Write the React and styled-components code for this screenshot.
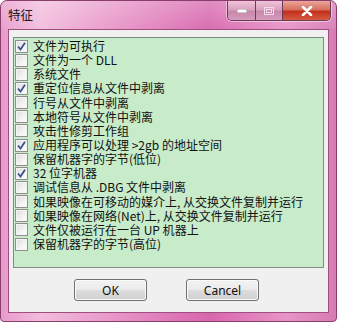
import React from "react";
import styled, { createGlobalStyle } from "styled-components";

const Global = createGlobalStyle`
  html, body { margin: 0; padding: 0; background: #ffffff; }
  body { width: 337px; height: 322px; overflow: hidden; }
`;

const Frame = styled.div`
  width: 337px;
  height: 322px;
  box-sizing: border-box;
  border: 1px solid #8a3e6c;
  border-radius: 7px 7px 4px 4px;
  background: linear-gradient(90deg, #e79ccb 0%, #f2bcdc 12%, #e48bc2 40%, #d866ad 62%, #e794c7 85%, #d77bb4 100%);
  display: flex;
  flex-direction: column;
  overflow: hidden;
  font-family: "Noto Sans CJK SC", "Noto Sans", sans-serif;
`;

const TitleBar = styled.div`
  height: 28px;
  display: flex;
  align-items: flex-start;
  justify-content: space-between;
  padding-left: 7px;
  background: linear-gradient(180deg, rgba(255,255,255,0.25) 0%, rgba(255,255,255,0.05) 100%);
`;

const Title = styled.div`
  margin-top: 5px;
  font-size: 12.5px;
  line-height: 17px;
  color: #1a1a1a;
`;

const Caption = styled.div`
  display: flex;
  margin-right: 5px;
  height: 19px;
  border: 1px solid #6b3b58;
  border-top: none;
  border-radius: 0 0 5px 5px;
  overflow: hidden;
  box-shadow: 0 0 0 1px rgba(255,255,255,0.45);
`;

const CapBtn = styled.div`
  width: ${(p) => p.$w}px;
  height: 19px;
  display: flex;
  align-items: center;
  justify-content: center;
  border-left: ${(p) => (p.$first ? "none" : "1px solid #6b3b58")};
  background: ${(p) =>
    p.$close
      ? "linear-gradient(180deg, #eaa69a 0%, #d7705e 45%, #c2301b 55%, #d65a3e 100%)"
      : "linear-gradient(180deg, #efc3d9 0%, #dba2c0 45%, #c888aa 55%, #d69bbd 100%)"};
`;

const Client = styled.div`
  flex: 1;
  margin: 0 7px 8px 7px;
  background: #f0f0f0;
  border: 1px solid #a04d7f;
  display: flex;
  flex-direction: column;
`;

const ListBox = styled.div`
  margin: 7px 4px 0 4px;
  height: 231px;
  box-sizing: border-box;
  border: 1px solid #7f8a86;
  background: #c8ebca;
  padding: 1px 0 0 1px;
  display: flex;
  flex-direction: column;
`;

const Row = styled.div`
  height: 14.15px;
  display: flex;
  align-items: center;
  gap: 5px;
`;

const Box = styled.div`
  width: 13px;
  height: 13px;
  box-sizing: border-box;
  border: 1px solid #8f8f8f;
  background: linear-gradient(135deg, #dcdcdc 0%, #f3f3f3 60%, #ffffff 100%);
  box-shadow: inset 0 0 0 1px #f4f4f4;
  display: flex;
  align-items: center;
  justify-content: center;
  flex: none;
`;

const Label = styled.span`
  font-size: 12px;
  line-height: 14px;
  color: #111;
  white-space: nowrap;
`;

const Buttons = styled.div`
  display: flex;
  gap: 39px;
  padding-left: 65px;
  margin-top: 11px;
`;

const Button = styled.div`
  width: 73px;
  height: 22px;
  box-sizing: border-box;
  border: 1px solid #707070;
  border-radius: 3px;
  background: linear-gradient(180deg, #f2f2f2 0%, #ebebeb 48%, #dddddd 52%, #cfcfcf 100%);
  box-shadow: inset 0 0 0 1px #fbfbfb;
  display: flex;
  align-items: center;
  justify-content: center;
  font-family: "Noto Sans", "DejaVu Sans", sans-serif;
  font-size: 12px;
  color: #111;
`;

const items = [
  ["文件为可执行", true],
  ["文件为一个 DLL", false],
  ["系统文件", false],
  ["重定位信息从文件中剥离", true],
  ["行号从文件中剥离", false],
  ["本地符号从文件中剥离", false],
  ["攻击性修剪工作组", false],
  ["应用程序可以处理 >2gb 的地址空间", true],
  ["保留机器字的字节(低位)", false],
  ["32 位字机器", true],
  ["调试信息从 .DBG 文件中剥离", false],
  ["如果映像在可移动的媒介上, 从交换文件复制并运行", false],
  ["如果映像在网络(Net)上, 从交换文件复制并运行", false],
  ["文件仅被运行在一台 UP 机器上", false],
  ["保留机器字的字节(高位)", false],
];

const Check = () => (
  <svg width="9" height="9" viewBox="0 0 9 9">
    <path d="M1 4.5 L3.5 7.5 L8 0.8" fill="none" stroke="#3d4f8a" strokeWidth="1.8" />
  </svg>
);

export default function App() {
  return (
    <>
      <Global />
      <Frame>
        <TitleBar>
          <Title>特征</Title>
          <Caption>
            <CapBtn $w={27} $first>
              <svg width="10" height="4"><rect x="0" y="0" width="10" height="4" fill="#fff" stroke="#555" strokeWidth="0.6" /></svg>
            </CapBtn>
            <CapBtn $w={26}>
              <svg width="10" height="8"><rect x="0.5" y="0.5" width="9" height="7" fill="none" stroke="#f6dcea" strokeWidth="1" /><rect x="2.5" y="2.5" width="5" height="3" fill="none" stroke="#f6dcea" strokeWidth="1" /></svg>
            </CapBtn>
            <CapBtn $w={47} $close>
              <svg width="12" height="10" viewBox="0 0 12 10"><path d="M2 1 L10 9 M10 1 L2 9" stroke="#fff" strokeWidth="2.6" strokeLinecap="round" /></svg>
            </CapBtn>
          </Caption>
        </TitleBar>
        <Client>
          <ListBox>
            {items.map(([t, c], i) => (
              <Row key={i}>
                <Box>{c && <Check />}</Box>
                <Label>{t}</Label>
              </Row>
            ))}
          </ListBox>
          <Buttons>
            <Button>OK</Button>
            <Button>Cancel</Button>
          </Buttons>
        </Client>
      </Frame>
    </>
  );
}
